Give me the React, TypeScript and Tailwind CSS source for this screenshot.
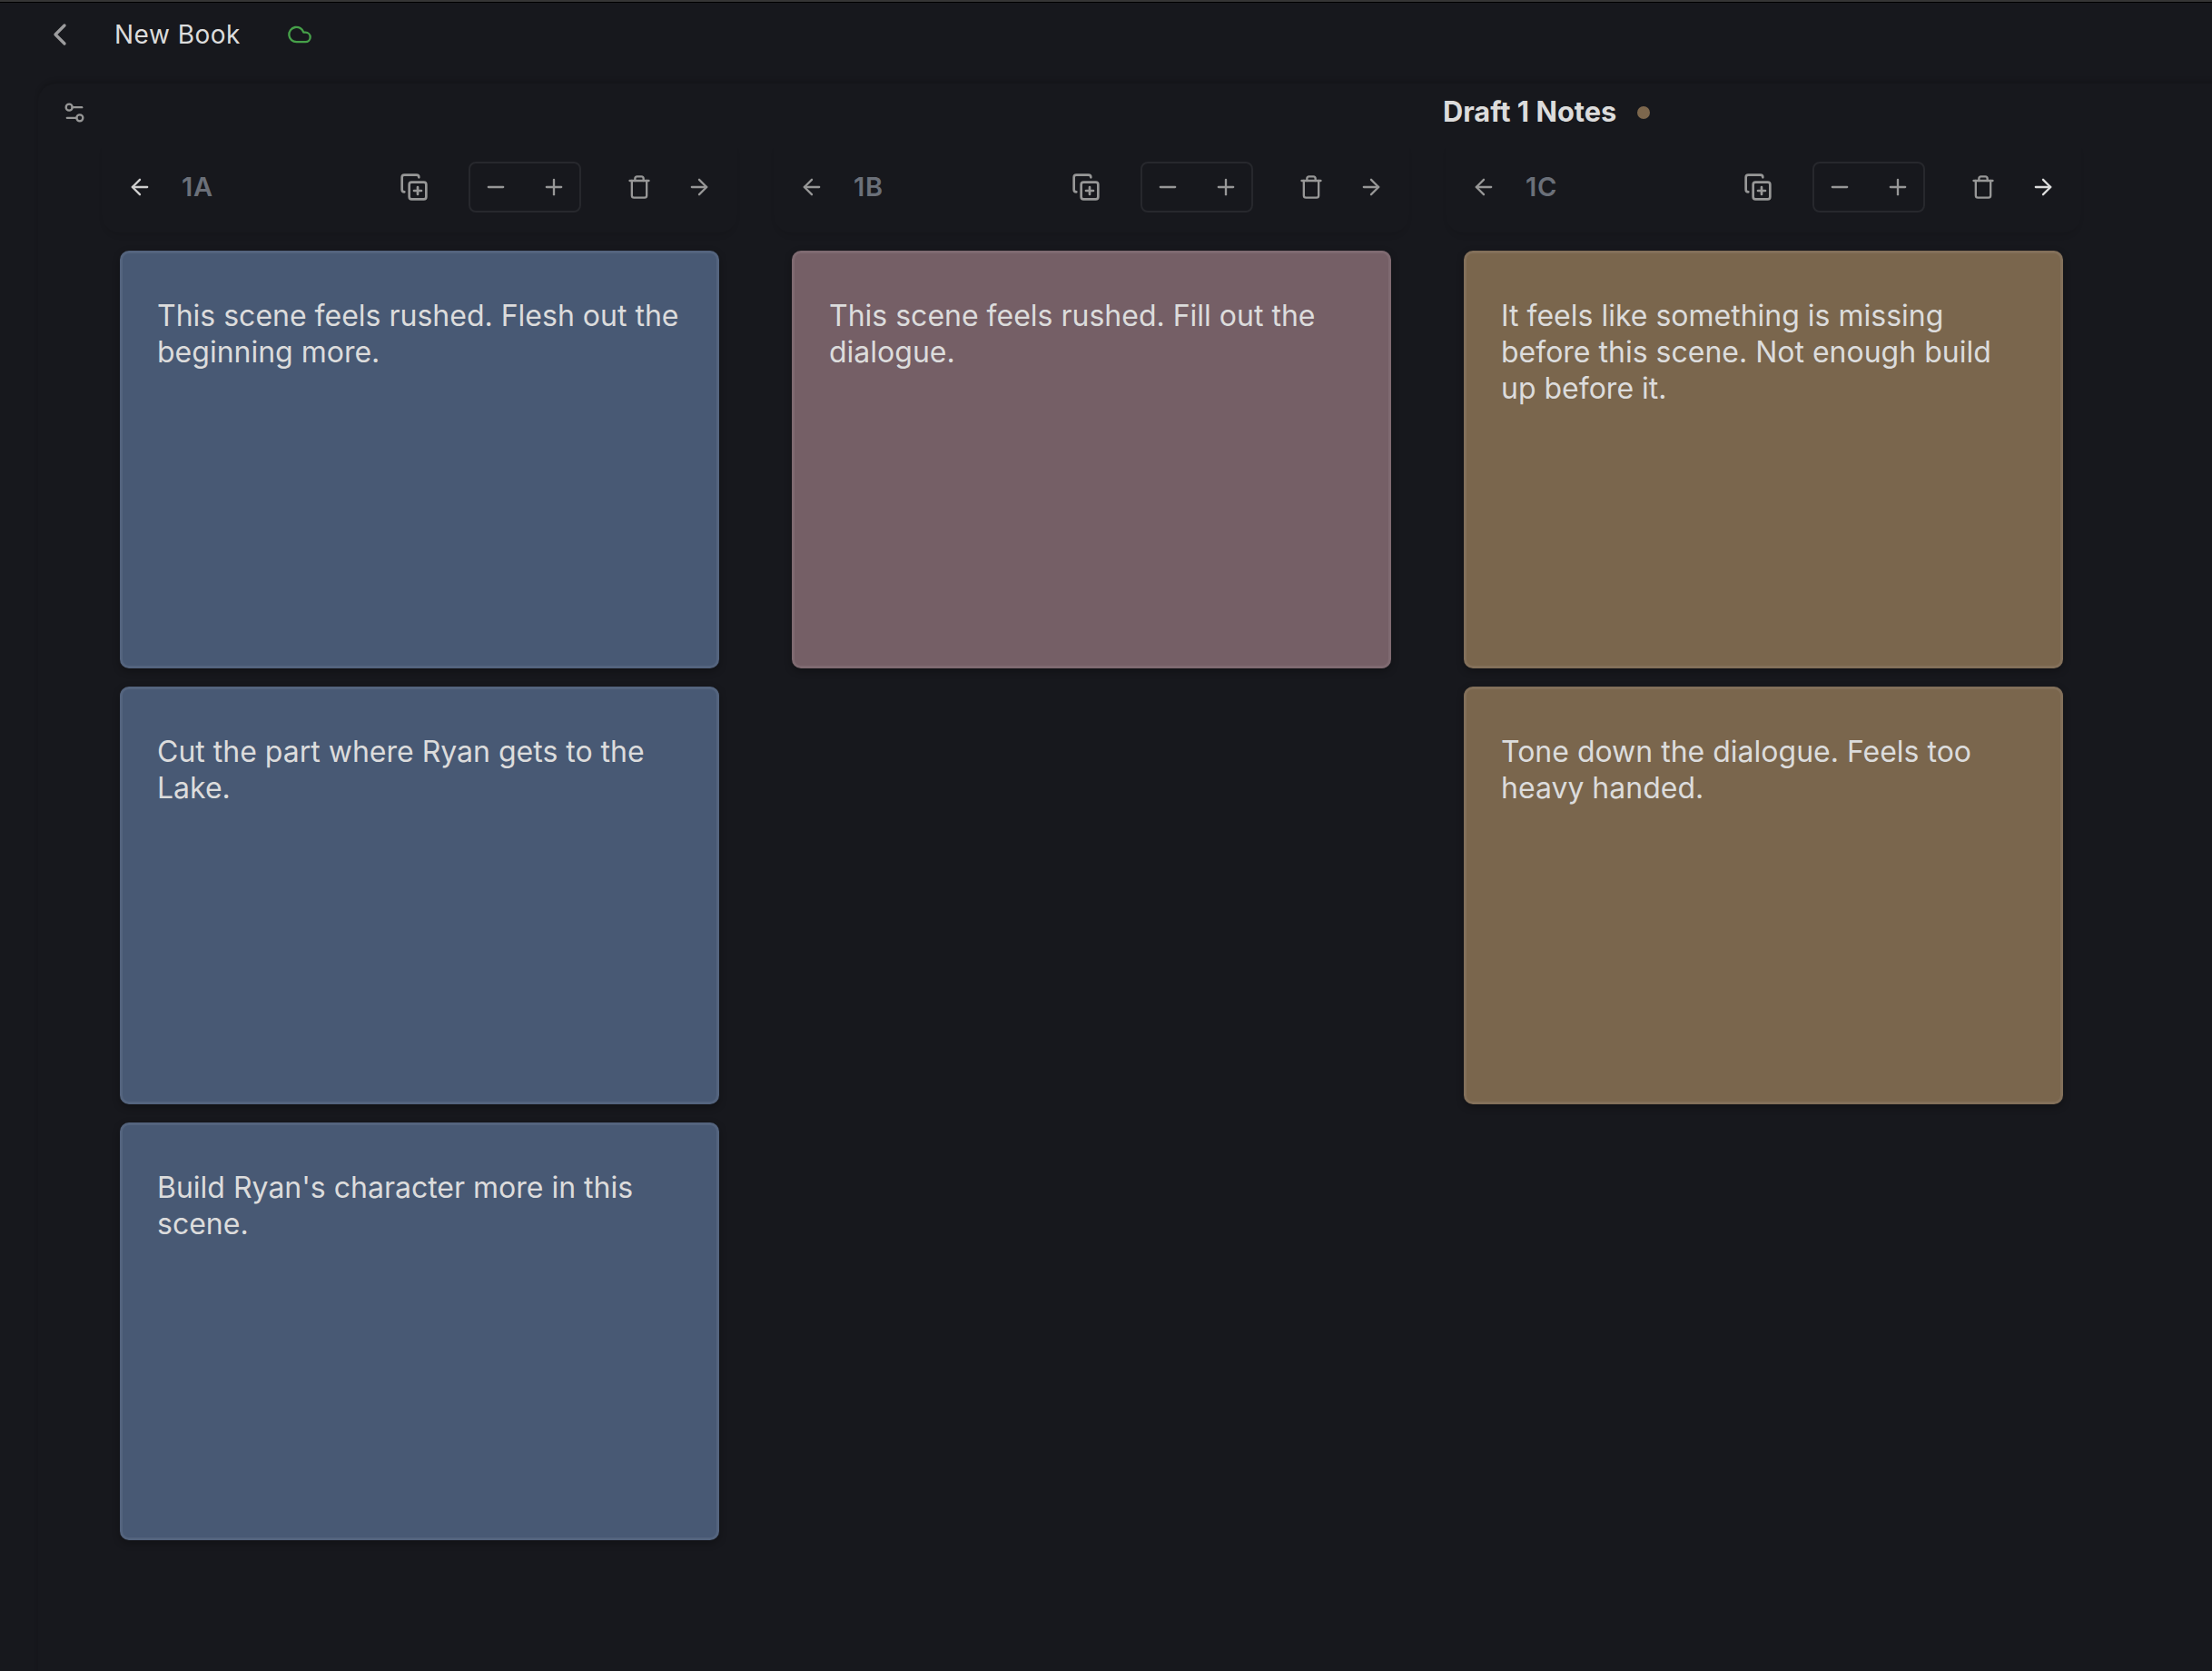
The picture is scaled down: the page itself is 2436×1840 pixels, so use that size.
import * as React from "react"
import {
  ArrowLeft,
  ArrowRight,
  ChevronLeft,
  Cloud,
  CopyPlus,
  Minus,
  Plus,
  Settings2,
  Trash,
} from "lucide-react"
import clsx from "clsx"

type Column = {
  label: string
  cardClass: string
  notes: string[]
}

const columns: Column[] = [
  {
    label: "1A",
    cardClass: "border-[#54647e] bg-[#485974]",
    notes: [
      "This scene feels rushed. Flesh out the beginning more.",
      "Cut the part where Ryan gets to the Lake.",
      "Build Ryan's character more in this scene.",
    ],
  },
  {
    label: "1B",
    cardClass: "border-[#7f6a71] bg-[#755f66]",
    notes: ["This scene feels rushed. Fill out the dialogue."],
  },
  {
    label: "1C",
    cardClass: "border-[#83705a] bg-[#7a664d]",
    notes: [
      "It feels like something is missing before this scene. Not enough build up before it.",
      "Tone down the dialogue. Feels too heavy handed.",
    ],
  },
]

function TopBar() {
  return (
    <header className="flex h-[70px] shrink-0 items-center pl-[46px]">
      <button type="button" aria-label="Back">
        <ChevronLeft className="size-10 text-[#9c9c9e]" strokeWidth={2} />
      </button>
      <h1 className="ml-10 w-[190px] text-[28px] leading-10 tracking-[0.5px] whitespace-nowrap text-[#dcdcdc]">
        New Book
      </h1>
      <Cloud className="size-7 text-[#46a049]" strokeWidth={2} />
    </header>
  )
}

function ColumnToolbar({
  label,
  first,
  last,
}: {
  label: string
  first: boolean
  last: boolean
}) {
  return (
    <div className="flex h-[100px] w-[700px] items-center rounded-b-[20px] px-5 text-[#979797] shadow-[0_6px_6px_-3px_rgba(0,0,0,0.1)]">
      <button type="button" className="ml-2" aria-label="Move left">
        <ArrowLeft
          className={clsx("size-7", first && "text-[#cfcfcf]")}
          strokeWidth={2}
        />
      </button>
      <span className="ml-8 flex-1 text-[29px] leading-10 font-semibold tracking-[0.8px] text-[#6b7079]">
        {label}
      </span>
      <button type="button" aria-label="Duplicate">
        <CopyPlus className="size-8" strokeWidth={2} />
      </button>
      <div className="ml-11 flex h-14 w-[124px] items-center justify-between rounded-lg border-2 border-[#27282d] px-3.5">
        <button type="button" aria-label="Decrease">
          <Minus className="size-7" strokeWidth={2} />
        </button>
        <button type="button" aria-label="Increase">
          <Plus className="size-7" strokeWidth={2} />
        </button>
      </div>
      <button type="button" className="ml-[50px]" aria-label="Delete">
        <Trash className="size-7" strokeWidth={2} />
      </button>
      <button type="button" className="mr-2 ml-[38px]" aria-label="Move right">
        <ArrowRight
          className={clsx("size-7", last && "text-[#dcdcdc]")}
          strokeWidth={2}
        />
      </button>
    </div>
  )
}

function NoteCard({ text, className }: { text: string; className: string }) {
  return (
    <article
      className={clsx(
        "h-[460px] w-[660px] rounded-[10px] border-[3px] pt-[49px] pr-9 pl-[38px] shadow-[0_3px_8px_rgba(0,0,0,0.3)]",
        className
      )}
    >
      <p className="text-[32px] leading-10 text-[#dcdcdc]">{text}</p>
    </article>
  )
}

export default function App() {
  return (
    <div className="flex h-[1840px] w-[2436px] flex-col overflow-hidden bg-[#17181d] font-['Inter',sans-serif]">
      <div className="h-[3px] shrink-0 border-b border-black bg-[#353535]" />
      <TopBar />
      <main className="mt-[19px] -mr-10 -mb-10 ml-[42px] flex-1 rounded-tl-[20px] shadow-[0_-3px_5px_rgba(0,0,0,0.16)]">
        <div className="flex h-16 items-center pl-[26px]">
          <Settings2 className="size-7 text-[#979797]" strokeWidth={2} />
          <h2 className="ml-[1493px] w-[190px] pb-0.5 text-[30.8px] leading-10 font-bold whitespace-nowrap text-[#dcdcdc]">
            Draft 1 Notes
          </h2>
          <span className="ml-6 size-3.5 rounded-full bg-[#7d674d]" />
        </div>
        <div className="flex gap-10 pl-[70px]">
          {columns.map((column, index) => (
            <section key={column.label} className="w-[700px]">
              <ColumnToolbar
                label={column.label}
                first={index === 0}
                last={index === columns.length - 1}
              />
              <div className="mt-5 flex flex-col gap-5 pl-5">
                {column.notes.map((note) => (
                  <NoteCard key={note} text={note} className={column.cardClass} />
                ))}
              </div>
            </section>
          ))}
        </div>
      </main>
    </div>
  )
}
